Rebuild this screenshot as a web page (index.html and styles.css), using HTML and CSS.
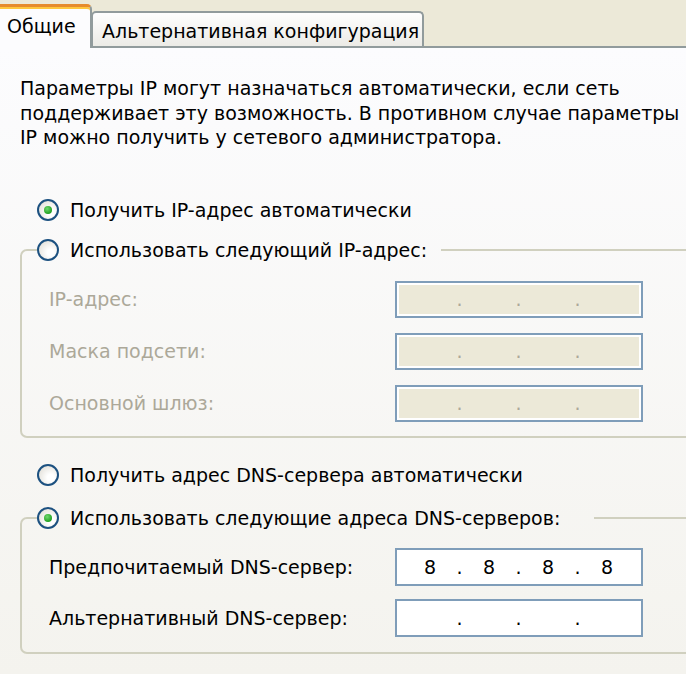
FILE: index.html
```html
<!DOCTYPE html>
<html lang="ru">
<head>
    <meta charset="UTF-8">
    <meta name="viewport" content="width=device-width, initial-scale=1.0">
    <title>Свойства: Протокол Интернета (TCP/IP)</title>
    <link rel="stylesheet" href="styles.css">
</head>
<body>
    <div class="tabs">
        <div class="tab active">Общие</div>
        <div class="tab">Альтернативная конфигурация</div>
    </div>
    <div class="panel">
        <p class="intro">Параметры IP могут назначаться автоматически, если сеть<br>поддерживает эту возможность. В противном случае параметры<br>IP можно получить у сетевого администратора.</p>

        <div class="option first"><span class="radio checked"></span>Получить IP-адрес автоматически</div>
        <fieldset class="group">
            <legend class="legend-ip"><span class="radio"></span>Использовать следующий IP-адрес:</legend>
            <div class="row disabled">
                <span class="label">IP-адрес:</span>
                <div class="ip"><span class="seg"></span><span class="dot">.</span><span class="seg"></span><span class="dot">.</span><span class="seg"></span><span class="dot">.</span><span class="seg"></span></div>
            </div>
            <div class="row disabled">
                <span class="label">Маска подсети:</span>
                <div class="ip"><span class="seg"></span><span class="dot">.</span><span class="seg"></span><span class="dot">.</span><span class="seg"></span><span class="dot">.</span><span class="seg"></span></div>
            </div>
            <div class="row disabled">
                <span class="label">Основной шлюз:</span>
                <div class="ip"><span class="seg"></span><span class="dot">.</span><span class="seg"></span><span class="dot">.</span><span class="seg"></span><span class="dot">.</span><span class="seg"></span></div>
            </div>
        </fieldset>

        <div class="option dns"><span class="radio"></span>Получить адрес DNS-сервера автоматически</div>
        <fieldset class="group group-dns">
            <legend class="legend-dns"><span class="radio checked"></span>Использовать следующие адреса DNS-серверов:</legend>
            <div class="row">
                <span class="label">Предпочитаемый DNS-сервер:</span>
                <div class="ip"><span class="seg">8</span><span class="dot">.</span><span class="seg">8</span><span class="dot">.</span><span class="seg">8</span><span class="dot">.</span><span class="seg">8</span></div>
            </div>
            <div class="row">
                <span class="label">Альтернативный DNS-сервер:</span>
                <div class="ip"><span class="seg"></span><span class="dot">.</span><span class="seg"></span><span class="dot">.</span><span class="seg"></span><span class="dot">.</span><span class="seg"></span></div>
            </div>
        </fieldset>
    </div>
</body>
</html>
```

FILE: styles.css
```css
body {
    margin: 0;
    padding: 0;
    height: 674px;
    overflow: hidden;
    font-family: "DejaVu Sans", Verdana, sans-serif;
    font-size: 19px;
    color: #000;
    background: #ece9d8;
}
.tabs {
    display: flex;
    align-items: flex-end;
    height: 46px;
    position: relative;
    z-index: 1;
}
.tab {
    height: 33px;
    padding: 0 3px 0 9px;
    line-height: 36px;
    white-space: nowrap;
    border: 2px solid #919b9c;
    border-bottom: none;
    border-radius: 5px 5px 0 0;
    background: linear-gradient(#fefefe, #ecebe6);
    margin-left: -1px;
}
.tab.active {
    height: 41px;
    width: 83px;
    padding-left: 7px;
    padding-right: 0;
    margin-left: 0;
    margin-bottom: -2px;
    line-height: 38px;
    background: #fcfcfe;
    border-left: none;
    border-top: 3px solid #e68b2c;
    border-radius: 0 5px 0 0;
    box-shadow: inset 0 2px 0 #ffc73c;
    z-index: 2;
}
.panel {
    height: 626px;
    overflow: hidden;
    border-top: 2px solid #919b9c;
    background: linear-gradient(#fcfcfe, #f4f3ee);
}
.intro {
    margin: 0;
    padding: 28px 0 0 20px;
    line-height: 24.5px;
    white-space: nowrap;
}
.option {
    display: flex;
    align-items: center;
    height: 24px;
    padding-left: 37px;
    white-space: nowrap;
}
.option.first {
    margin-top: 48px;
}
.option.dns {
    margin-top: 25px;
}
.radio {
    display: inline-block;
    box-sizing: border-box;
    width: 22px;
    height: 22px;
    margin-right: 11px;
    border: 2px solid #1c5180;
    border-radius: 50%;
    background: radial-gradient(circle at 65% 65%, #fff 20%, #dcd9d0 100%);
    position: relative;
    flex-shrink: 0;
}
.radio.checked::after {
    content: "";
    position: absolute;
    left: 5px;
    top: 5px;
    width: 8px;
    height: 8px;
    border-radius: 50%;
    background: radial-gradient(circle at 40% 35%, #6fd86f, #21a121 70%);
}
.group {
    margin: 16px 0 0 20px;
    padding: 0 0 14px 27px;
    width: 680px;
    border: 2px solid #d0d0bf;
    border-radius: 7px;
}
.group-dns {
    margin-top: 19px;
    padding-bottom: 15px;
}
.group legend {
    display: flex;
    align-items: center;
    height: 24px;
    margin-left: -12px;
    padding: 0 14px 0 0;
    white-space: nowrap;
}
.group .legend-dns {
    padding-right: 34px;
}
.row {
    display: flex;
    align-items: center;
    margin-top: 15px;
    white-space: nowrap;
}
.row:first-of-type {
    margin-top: 19px;
}
.group-dns .row {
    margin-top: 13px;
}
.group-dns .row:first-of-type {
    margin-top: 18px;
}
.label {
    width: 346px;
}
.disabled .label {
    color: #aca899;
}
.ip {
    display: flex;
    box-sizing: border-box;
    width: 248px;
    height: 37px;
    padding: 0 8px;
    align-items: center;
    border: 2px solid #7f9db9;
    background: #fff;
}
.group-dns .ip {
    height: 38px;
}
.disabled .ip {
    background: #ece9d8;
    box-shadow: inset 0 0 0 2px #fff;
    color: #aca899;
}
.seg {
    width: 50px;
    text-align: center;
}
.dot {
    width: 9px;
    text-align: center;
}
```
